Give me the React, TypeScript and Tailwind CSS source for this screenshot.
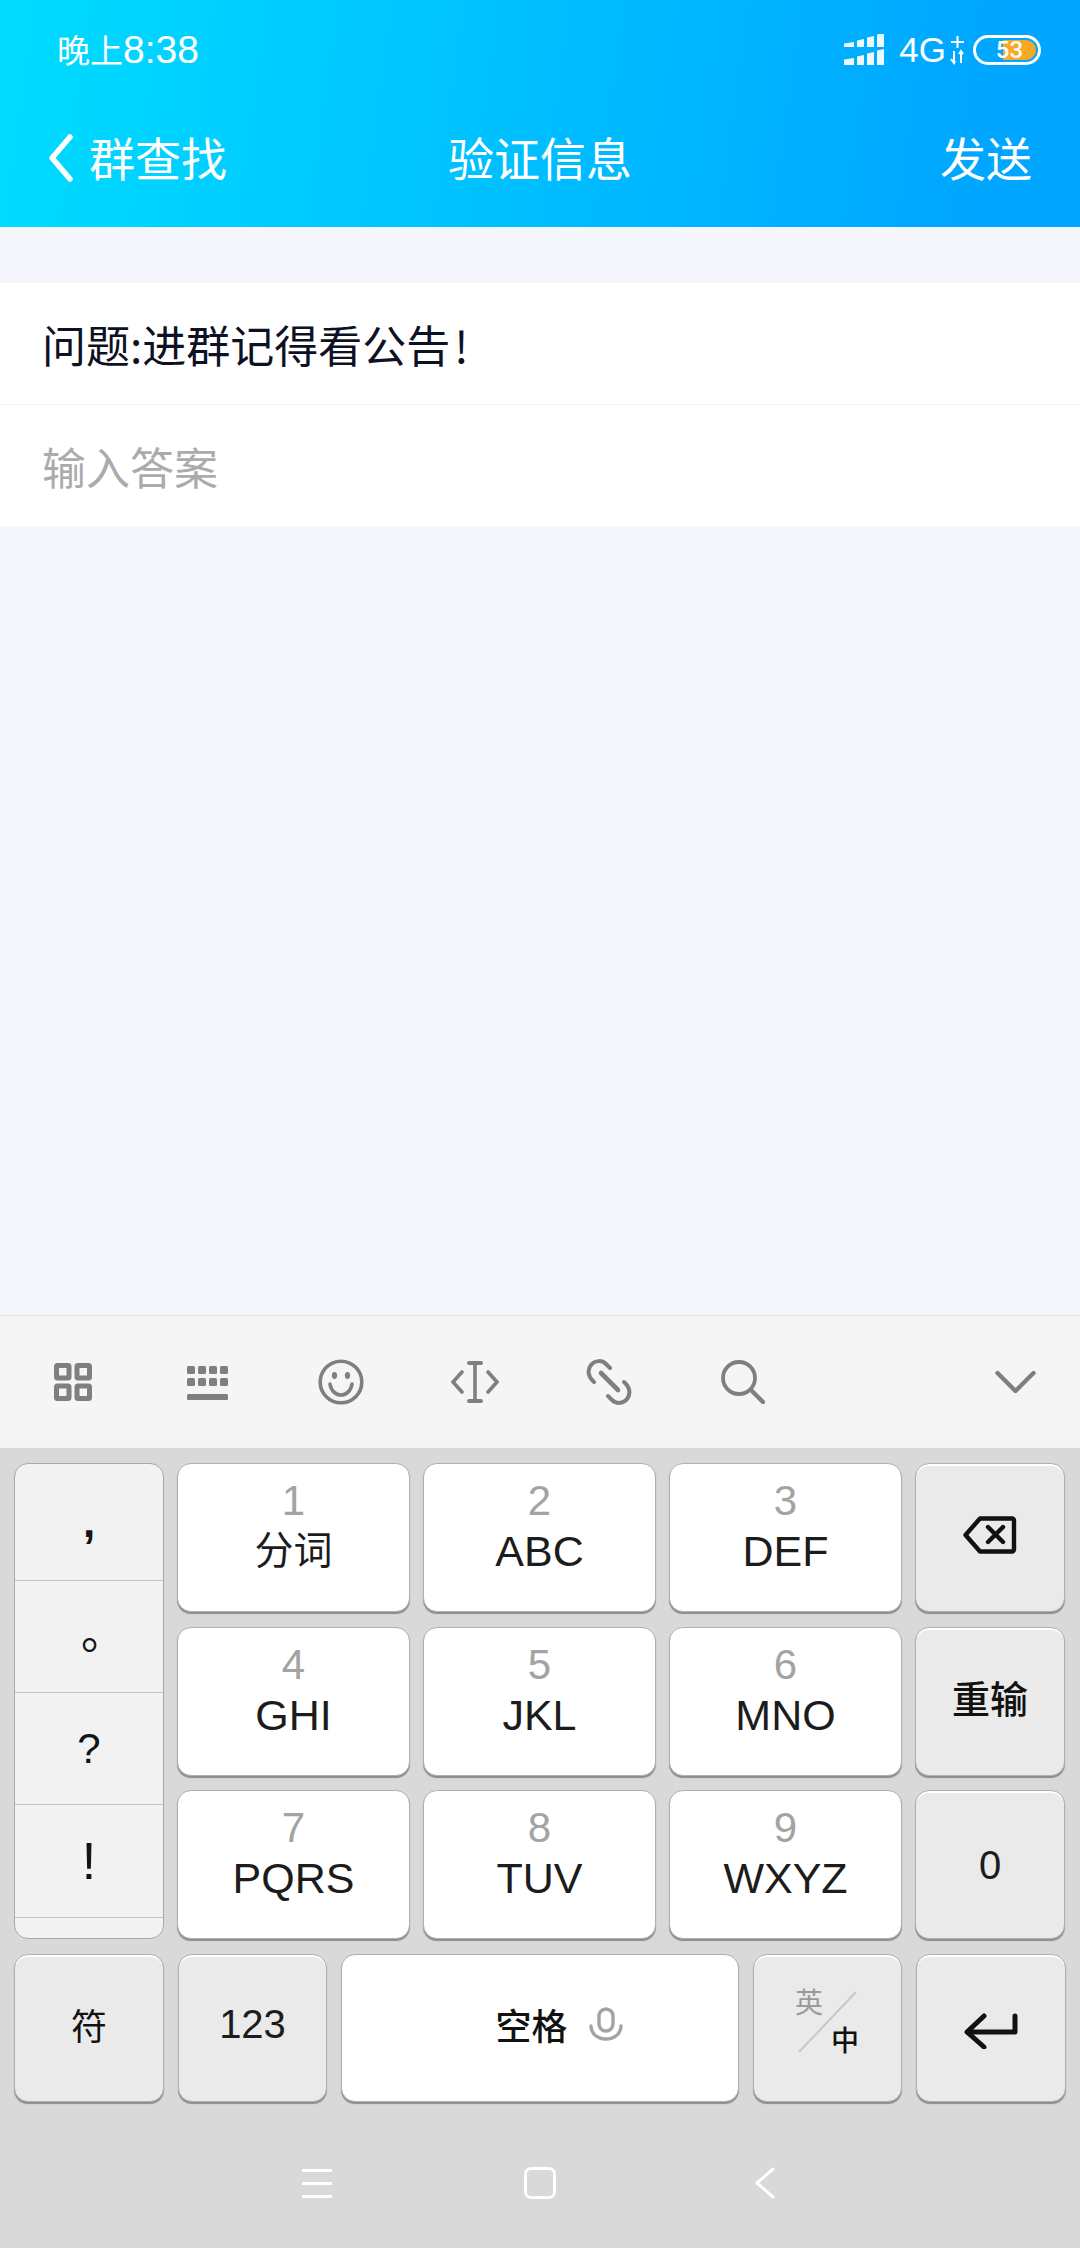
import React from "react";

const CJK = "font-['Noto_Sans_CJK_SC','Noto_Sans',sans-serif]";
const LAT = "font-['Liberation_Sans','Noto_Sans_CJK_SC',sans-serif]";
const KEY = "border border-[#b0b0b0] shadow-[0_2px_1px_#8c8c8c]";

function Signal() {
  const widths = [10, 7, 7, 7];
  const xs = [0, 13, 23, 33];
  return (
    <svg width="40" height="31" viewBox="0 0 40 31" fill="#fff">
      {xs.map((x, i) => (
        <React.Fragment key={x}>
          <path d={`M${x} ${9 - i * 3 + 0.5}l${widths[i]} -1.5V13H${x}z`} opacity="0.92" />
          <path d={`M${x} ${25 - i * 3 + 0.5}l${widths[i]} -1.5V31H${x}z`} opacity="0.92" />
        </React.Fragment>
      ))}
    </svg>
  );
}

function DataArrows() {
  return (
    <svg width="15" height="30" viewBox="0 0 15 30" fill="none" stroke="#fff" strokeWidth="2">
      <path d="M7.5 1v12M1 7h13" />
      <path d="M4 16v12M1 24l3 4 1-2M11 28V16M9 19l2-3 2 3" />
    </svg>
  );
}

function Battery() {
  return (
    <div className="relative ml-[8px] h-[30px] w-[68px] rounded-[15px] border-[3px] border-white">
      <div className="absolute right-[2px] top-[2px] h-[20px] w-[33px] rounded-r-[10px] bg-[#f9a825]" />
      <span className="absolute inset-0 flex items-center justify-center pl-[5px] font-['Roboto',sans-serif] text-[24px] font-medium leading-none text-white">
        53
      </span>
    </div>
  );
}

function GridIcon() {
  return (
    <svg width="38" height="38" viewBox="0 0 38 38" fill="none" stroke="#7f7f7f" strokeWidth="5">
      <rect x="2.5" y="2.5" width="12.5" height="12.5" rx="1" />
      <rect x="23" y="2.5" width="12.5" height="12.5" rx="1" />
      <rect x="2.5" y="23" width="12.5" height="12.5" rx="1" />
      <rect x="23" y="23" width="12.5" height="12.5" rx="1" />
    </svg>
  );
}

function KeyboardIcon() {
  const cols = [0, 11, 22, 33];
  return (
    <svg width="41" height="34" viewBox="0 0 41 34" fill="#7f7f7f" className="mt-[2px]">
      {cols.map((x) => (
        <React.Fragment key={x}>
          <rect x={x} y="0" width="8" height="8" rx="1.5" />
          <rect x={x} y="12" width="8" height="8" rx="1.5" />
        </React.Fragment>
      ))}
      <rect x="0" y="28" width="41" height="6" rx="1.5" />
    </svg>
  );
}

function SmileIcon() {
  return (
    <svg width="46" height="46" viewBox="0 0 46 46" fill="none" stroke="#7f7f7f" strokeWidth="3.6">
      <circle cx="23" cy="23" r="20.8" />
      <ellipse cx="16.5" cy="16.5" rx="2.6" ry="3.4" fill="#7f7f7f" stroke="none" />
      <ellipse cx="29.5" cy="16.5" rx="2.6" ry="3.4" fill="#7f7f7f" stroke="none" />
      <path d="M12 25c1 7 6 11 11 11s10-4 11-11" strokeLinecap="round" />
    </svg>
  );
}

function CursorIcon() {
  return (
    <svg width="48" height="42" viewBox="0 0 48 42" fill="none" stroke="#7f7f7f" strokeWidth="3.6" strokeLinecap="round">
      <path d="M24 2v38" />
      <path d="M18 2h12M18 40h12" strokeWidth="4" />
      <path d="M11 11l-9 10 9 10M37 11l9 10-9 10" />
    </svg>
  );
}

function LinkIcon() {
  return (
    <svg width="46" height="46" viewBox="0 0 46 46" fill="none" stroke="#7f7f7f" strokeWidth="4" strokeLinecap="round">
      <path d="M8 23C2 18 1 11 5 6s11-5 15-1l4 4" />
      <path d="M15 14l17 17" strokeWidth="4.6" />
      <path d="M38 23c6 5 7 12 3 17s-11 5-15 1l-4-4" />
    </svg>
  );
}

function SearchIcon() {
  return (
    <svg width="44" height="44" viewBox="0 0 44 44" fill="none" stroke="#7f7f7f" strokeWidth="3.8" strokeLinecap="round">
      <circle cx="18" cy="18" r="16" />
      <path d="M30 30l12 12" strokeWidth="4.4" />
    </svg>
  );
}

function ChevronIcon() {
  return (
    <svg width="41" height="24" viewBox="0 0 41 24" fill="none" stroke="#7f7f7f" strokeWidth="4.4" strokeLinecap="round" strokeLinejoin="round">
      <path d="M2.5 3l18 18 18-18" />
    </svg>
  );
}

function Key({ n, label, small = false }: { n: string; label: string; small?: boolean }) {
  return (
    <div className={`flex flex-col items-center rounded-[14px] bg-white pt-[12px] ${LAT} ${KEY}`}>
      <span className="h-[50px] text-[42px] leading-[50px] text-[#a3a3a3]">{n}</span>
      <span className={`h-[50px] leading-[50px] text-[#1c1c1c] ${small ? "text-[39px]" : "text-[43px]"}`}>{label}</span>
    </div>
  );
}

function GrayKey({ children, className = "" }: { children?: React.ReactNode; className?: string }) {
  return (
    <div className={`relative flex items-center justify-center rounded-[14px] border border-[#b0b0b0] bg-[#eaeaea] [box-shadow:inset_0_2px_0_#fff,0_2px_1px_#8c8c8c] ${LAT} ${className}`}>
      {children}
    </div>
  );
}

export default function App() {
  return (
    <div className={`flex h-[2248px] w-[1080px] flex-col overflow-hidden bg-[#f4f6fb] ${CJK}`}>
      <header className="h-[227px] shrink-0 bg-[linear-gradient(98deg,#00dcff_0%,#00a6ff_90%)] text-white">
        <div className="flex h-[89px] items-center justify-between pl-[57px] pr-[39px] pt-[10px]">
          <div className="flex items-baseline">
            <span className="text-[33px] leading-none">晚上</span>
            <span className="font-['Liberation_Sans',sans-serif] text-[39px] leading-none">8:38</span>
          </div>
          <div className="flex items-center">
            <Signal />
            <span className="ml-[15px] mr-[4px] font-['Liberation_Sans',sans-serif] text-[35px] leading-none">4G</span>
            <DataArrows />
            <Battery />
          </div>
        </div>
        <div className="grid h-[138px] grid-cols-3 items-center pl-[48px] pr-[48px] text-[46px] leading-none">
          <div className="flex items-center">
            <svg width="26" height="48" viewBox="0 0 26 48" fill="none" stroke="#fff" strokeWidth="5.5" strokeLinecap="round" strokeLinejoin="round">
              <path d="M22 3L4 24l18 21" />
            </svg>
            <span className="mb-[5px] ml-[15px]">群查找</span>
          </div>
          <div className="mb-[5px] text-center">验证信息</div>
          <div className="mb-[5px] text-right">发送</div>
        </div>
      </header>

      <main className="flex-1 pt-[56px]">
        <div className="flex h-[122px] items-center border-b border-[#f2f2f4] bg-white pl-[42px] text-[44px] text-[#0e1124]">
          问题:进群记得看公告<span className="ml-[4px]">!</span>
        </div>
        <div className="flex h-[121px] items-center bg-white pl-[42px] text-[44px] text-[#ababab]">输入答案</div>
      </main>

      <div className="flex h-[133px] shrink-0 items-center justify-between border-t border-[#e2e2e4] bg-[#f5f5f5] pl-[6px] pr-[44px]">
        <div className="flex items-center">
          <div className="flex w-[134px] justify-center"><GridIcon /></div>
          <div className="flex w-[134px] justify-center"><KeyboardIcon /></div>
          <div className="flex w-[134px] justify-center"><SmileIcon /></div>
          <div className="flex w-[134px] justify-center"><CursorIcon /></div>
          <div className="flex w-[134px] justify-center"><LinkIcon /></div>
          <div className="flex w-[134px] justify-center"><SearchIcon /></div>
        </div>
        <ChevronIcon />
      </div>

      <div className="h-[800px] shrink-0 bg-[#d9d9d9] pt-[15px]">
        <div className="grid grid-cols-[150px_233px_233px_233px_150px] gap-x-[13px] gap-y-[14.5px] pl-[14px] pr-[14px] [grid-template-rows:149px_149px_149px]">
          <div className={`row-span-3 flex flex-col overflow-hidden rounded-[14px] border border-[#a9a9a9] bg-[#f2f2f2] text-[#141414] ${LAT}`}>
            <div className="flex h-[117px] shrink-0 items-center justify-center border-b border-[#c4c4c4] text-[44px] font-bold">,</div>
            <div className="flex h-[112px] shrink-0 items-center justify-center border-b border-[#c4c4c4] pl-[28px] text-[44px] leading-none">
              <span className={`${CJK} translate-y-[-7px]`}>。</span>
            </div>
            <div className="flex h-[112px] shrink-0 items-center justify-center border-b border-[#c4c4c4] text-[42px]">?</div>
            <div className="flex h-[113px] shrink-0 items-center justify-center border-b border-[#c4c4c4] text-[52px]">!</div>
          </div>
          <Key n="1" label="分词" small />
          <Key n="2" label="ABC" />
          <Key n="3" label="DEF" />
          <GrayKey>
            <svg width="54" height="38" viewBox="0 0 54 38" fill="none" stroke="#111" strokeWidth="4.4" strokeLinejoin="round" strokeLinecap="round" className="mb-[6px]">
              <path d="M17 2.5h32a2 2 0 0 1 2 2v29a2 2 0 0 1-2 2H17L2.5 19z" />
              <path d="M25 11l15 15M40 11L25 26" />
            </svg>
          </GrayKey>
          <Key n="4" label="GHI" />
          <Key n="5" label="JKL" />
          <Key n="6" label="MNO" />
          <GrayKey>
            <span className={`${CJK} mb-[10px] text-[38px] font-medium text-[#111]`}>重输</span>
          </GrayKey>
          <Key n="7" label="PQRS" />
          <Key n="8" label="TUV" />
          <Key n="9" label="WXYZ" />
          <GrayKey>
            <span className="text-[40px] text-[#1c1c1c]">0</span>
          </GrayKey>
        </div>

        <div className="mt-[15px] flex h-[148px] gap-x-[14px] pl-[14px] pr-[14px]">
          <GrayKey className="w-[150px]">
            <span className={`${CJK} mb-[9px] text-[36px] text-[#111]`}>符</span>
          </GrayKey>
          <GrayKey className="w-[149px]">
            <span className="mb-[8px] text-[40px] text-[#1c1c1c]">123</span>
          </GrayKey>
          <div className={`flex w-[398px] items-center justify-center rounded-[14px] bg-white pb-[9px] pl-[38px] ${KEY}`}>
            <span className={`${CJK} text-[36px] font-medium text-[#111]`}>空格</span>
            <svg width="34" height="34" viewBox="0 0 34 34" fill="none" stroke="#a3a3a3" strokeWidth="3.4" strokeLinecap="round" className="ml-[21px]">
              <rect x="10" y="2" width="14" height="22" rx="7" />
              <path d="M2 19c0 8 7 13 15 13s15-5 15-13" />
            </svg>
          </div>
          <GrayKey className="w-[149px]">
            <span className={`${CJK} absolute left-[41px] top-[32px] text-[28px] leading-none text-[#9a9a9a]`}>英</span>
            <span className={`${CJK} absolute left-[77px] top-[70px] text-[28px] font-medium leading-none text-[#111]`}>中</span>
            <svg width="60" height="62" viewBox="0 0 60 62" className="absolute left-[44px] top-[36px]" stroke="#c8c8c8" strokeWidth="2">
              <path d="M58 1L1 61" />
            </svg>
          </GrayKey>
          <GrayKey className="w-[150px]">
            <svg width="54" height="36" viewBox="0 0 54 36" fill="none" stroke="#111" strokeWidth="5" strokeLinecap="round" strokeLinejoin="round" className="mt-[5px]">
              <path d="M51 3v16H4" />
              <path d="M20 3L3 19l17 15" />
            </svg>
          </GrayKey>
        </div>

        <div className="mt-[65px] flex items-center justify-center">
          <div className="flex w-[418px] items-center justify-center pl-[4px]">
            <div className="flex w-[30px] flex-col gap-y-[10px]">
              <div className="h-[3px] bg-white" />
              <div className="h-[3px] bg-white" />
              <div className="h-[3px] bg-white" />
            </div>
          </div>
          <div className="h-[32px] w-[32px] rounded-[7px] border-[3px] border-white" />
          <div className="flex w-[418px] items-center justify-center">
            <svg width="20" height="32" viewBox="0 0 20 32" fill="none" stroke="#fff" strokeWidth="3" strokeLinecap="round" strokeLinejoin="round">
              <path d="M18 2L2 16l16 14" />
            </svg>
          </div>
        </div>
      </div>
    </div>
  );
}
